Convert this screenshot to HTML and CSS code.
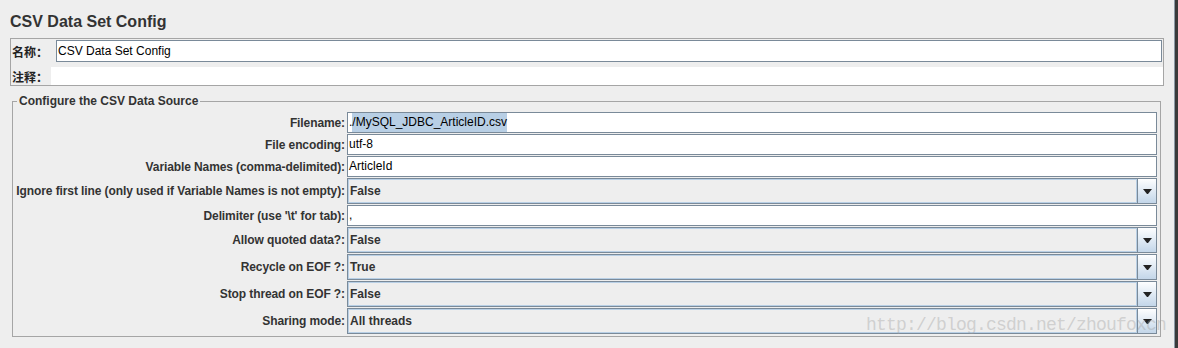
FILE: index.html
```html
<!DOCTYPE html>
<html lang="en">
<head>
    <meta charset="UTF-8">
    <title>CSV Data Set Config</title>
    <link rel="stylesheet" href="styles.css">
</head>
<body>
    <div class="window">
        <div class="content">
            <h1 class="title">CSV Data Set Config</h1>

            <div class="name-panel">
                <div class="name-row">
                    <span class="panel-label name-label">名称：</span>
                    <div class="text-field">CSV Data Set Config</div>
                </div>
                <div class="comment-row">
                    <span class="panel-label comment-label">注释：</span>
                    <div class="text-area"></div>
                </div>
            </div>

            <fieldset class="group">
                <legend>Configure the CSV Data Source</legend>
                <div class="form-grid">
                    <span class="form-label">Filename:</span>
                    <div class="text-field">.<span class="caret"></span><span class="selection">/MySQL_JDBC_ArticleID.csv</span></div>

                    <span class="form-label">File encoding:</span>
                    <div class="text-field">utf-8</div>

                    <span class="form-label">Variable Names (comma-delimited):</span>
                    <div class="text-field">ArticleId</div>

                    <span class="form-label">Ignore first line (only used if Variable Names is not empty):</span>
                    <div class="combo">
                        <div class="combo-value">False</div>
                        <div class="combo-button"><svg width="9" height="5" viewBox="0 0 9 5"><polygon points="0,0 9,0 5,5 4,5" fill="#222"/></svg></div>
                    </div>

                    <span class="form-label">Delimiter (use '\t' for tab):</span>
                    <div class="text-field">,</div>

                    <span class="form-label">Allow quoted data?:</span>
                    <div class="combo">
                        <div class="combo-value">False</div>
                        <div class="combo-button"><svg width="9" height="5" viewBox="0 0 9 5"><polygon points="0,0 9,0 5,5 4,5" fill="#222"/></svg></div>
                    </div>

                    <span class="form-label">Recycle on EOF ?:</span>
                    <div class="combo">
                        <div class="combo-value">True</div>
                        <div class="combo-button"><svg width="9" height="5" viewBox="0 0 9 5"><polygon points="0,0 9,0 5,5 4,5" fill="#222"/></svg></div>
                    </div>

                    <span class="form-label">Stop thread on EOF ?:</span>
                    <div class="combo">
                        <div class="combo-value">False</div>
                        <div class="combo-button"><svg width="9" height="5" viewBox="0 0 9 5"><polygon points="0,0 9,0 5,5 4,5" fill="#222"/></svg></div>
                    </div>

                    <span class="form-label">Sharing mode:</span>
                    <div class="combo">
                        <div class="combo-value">All threads</div>
                        <div class="combo-button"><svg width="9" height="5" viewBox="0 0 9 5"><polygon points="0,0 9,0 5,5 4,5" fill="#222"/></svg></div>
                    </div>
                </div>
            </fieldset>
        </div>
        <div class="edge"></div>
        <div class="watermark">http://blog.csdn.net/zhoufoxcn</div>
    </div>
</body>
</html>
```

FILE: styles.css
```css
body { margin: 0; background: #eeeeee; font-family: "Liberation Sans", "Noto Sans CJK SC", sans-serif; font-size: 12px; color: #333333; }
.window { display: flex; height: 348px; position: relative; overflow: hidden; }
.content { flex: 1; min-width: 0; }
.edge { width: 3px; border-left: 1px solid #8c9aa6; background: #3a3a3a; }

.title { margin: 0 0 7px 10px; padding-top: 13px; font-size: 16px; line-height: 18px; font-weight: bold; color: #333333; }

.name-panel { margin: 0 10px; border: 1px solid #a5a5a5; padding: 1px 0 0 1px; }
.name-row { display: flex; align-items: center; height: 22px; padding-right: 1px; }
.comment-row { display: flex; align-items: center; height: 18px; margin-top: 5px; }
.panel-label { font-weight: bold; font-size: 12px; white-space: nowrap; color: #222222; }
.name-label { width: 44px; }
.comment-label { width: 39px; }
.name-row .text-field { flex: 1; height: 22px; line-height: 20px; }
.text-area { flex: 1; align-self: stretch; background: #ffffff; }

.group { margin: 8px 13px 0 12px; border: 1px solid #a5a5a5; padding: 4px 3px 2px 0; min-width: 0; }
.group legend { margin-left: 4px; padding: 0 2px; font-weight: bold; line-height: 14px; color: #333333; }

.form-grid { display: grid; grid-template-columns: 332px 1fr; column-gap: 2px; row-gap: 1px; align-items: center; }
.form-label { text-align: right; font-weight: bold; white-space: nowrap; letter-spacing: -0.1px; }

.text-field { height: 21px; box-sizing: border-box; border: 1px solid #7a8a99; background: #ffffff; padding-left: 1px; line-height: 19px; color: #000000; white-space: nowrap; overflow: hidden; }
.caret { display: inline-block; width: 1px; height: 15px; margin-right: -1px; background: #000000; vertical-align: middle; }
.selection { background: #b8cfe5; display: inline-block; }

.combo { height: 26px; box-sizing: border-box; border: 1px solid #7a8a99; display: flex; background: #eeeeee; }
.combo-value { flex: 1; border: 1px solid #b8cfe5; padding-left: 1px; line-height: 22px; font-weight: bold; color: #333333; }
.combo-button { width: 18px; border-left: 1px solid #7a8a99; background: linear-gradient(#fdfeff, #c3d6e9); display: flex; align-items: center; justify-content: center; }

.watermark { position: absolute; left: 866px; top: 315px; font-family: "Liberation Mono", monospace; font-size: 18px; letter-spacing: -0.8px; line-height: 20px; color: rgba(160, 160, 160, 0.4); white-space: nowrap; }
```
